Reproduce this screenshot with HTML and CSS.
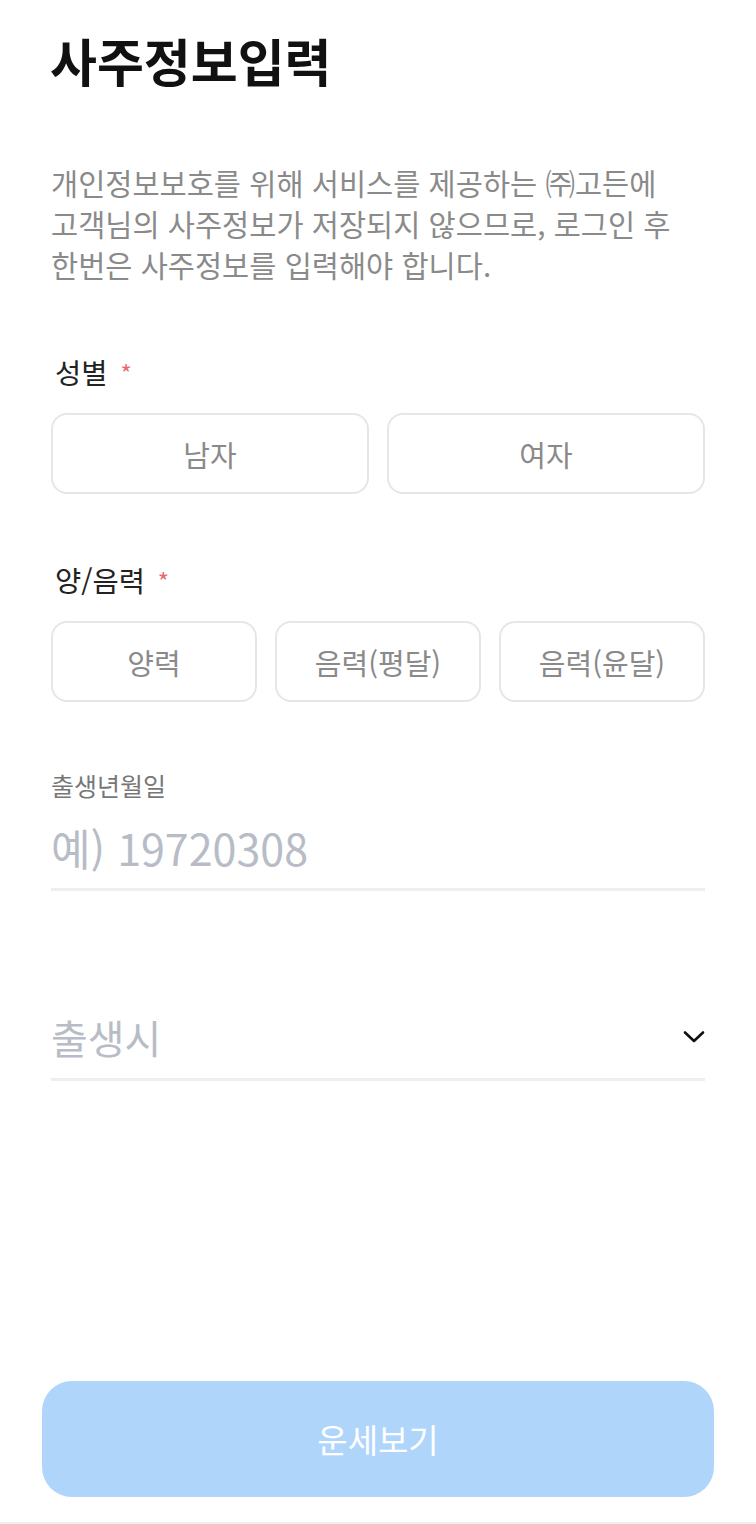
FILE: index.html
```html
<!DOCTYPE html>
<html lang="ko">
<head>
  <meta charset="UTF-8">
  <title>사주정보입력</title>
  <link rel="stylesheet" href="styles.css">
</head>
<body>
  <div class="page">
    <h1>사주정보입력</h1>
    <p class="notice">개인정보보호를 위해 서비스를 제공하는 ㈜고든에<br>고객님의 사주정보가 저장되지 않으므로, 로그인 후<br>한번은 사주정보를 입력해야 합니다.</p>

    <!-- 성별 -->
    <div class="label">성별 <span class="req">*</span></div>
    <div class="choices two">
      <button class="choice">남자</button>
      <button class="choice">여자</button>
    </div>

    <!-- 양/음력 -->
    <div class="label cal">양/음력 <span class="req">*</span></div>
    <div class="choices three">
      <button class="choice">양력</button>
      <button class="choice">음력(평달)</button>
      <button class="choice">음력(윤달)</button>
    </div>

    <div class="small-label">출생년월일</div>
    <div class="field">
      <input type="text" placeholder="예) 19720308">
    </div>

    <div class="field select">
      <span class="placeholder">출생시</span>
      <svg width="24" height="24" viewBox="0 0 24 24"><path d="M3 7.5l9 8.5 9-8.5" fill="none" stroke="#111" stroke-width="2.6" stroke-linecap="round" stroke-linejoin="round"/></svg>
    </div>

    <div class="spacer"></div>
    <button class="submit">운세보기</button>
  </div>
  <div class="bottom"></div>
</body>
</html>
```

FILE: styles.css
```css
* {
  box-sizing: border-box;
}

body {
  margin: 0;
  background: #fff;
  font-family: "Noto Sans CJK KR", "Noto Sans", sans-serif;
  color: #222;
}

.page {
  height: 1522px;
  display: flex;
  flex-direction: column;
  padding: 0 51px 0 51px;
}

h1 {
  margin: 22px 0 0 -1px;
  font-size: 51px;
  font-weight: 700;
  line-height: 76px;
  color: #111;
}

.notice {
  margin: 64px 0 0 0;
  font-size: 29.5px;
  line-height: 41px;
  color: #8a8a8a;
}

.label {
  margin-top: 67px;
  padding-left: 4px;
  font-size: 28.5px;
  line-height: 40px;
  color: #222;
}

.label.cal {
  margin-top: 66px;
}

.req {
  color: #e86a6a;
  font-size: 24px;
  margin-left: 5px;
  vertical-align: 1px;
}

.choices {
  display: grid;
  gap: 18px;
  margin-top: 20px;
}

.choices.two {
  grid-template-columns: 1fr 1fr;
}

.choices.three {
  grid-template-columns: 1fr 1fr 1fr;
}

.choice {
  height: 81px;
  border: 2px solid #e6e6e6;
  border-radius: 16px;
  background: #fff;
  font-family: inherit;
  font-size: 29px;
  color: #8a8a8a;
}

.small-label {
  margin-top: 63px;
  font-size: 25px;
  line-height: 40px;
  color: #777;
}

.field {
  display: flex;
  align-items: center;
  height: 86px;
  border-bottom: 3px solid #eeeeee;
}

.field input {
  border: none;
  outline: none;
  width: 100%;
  padding: 0;
  font-family: inherit;
  font-size: 43px;
  color: #222;
}

.field input::placeholder {
  color: #b8bcc6;
}

.field.select {
  margin-top: 104px;
  justify-content: space-between;
}

.placeholder {
  font-size: 40px;
  color: #b8bcc6;
}

.field.select svg {
  margin-right: -1px;
}

.spacer {
  flex: 1;
}

.submit {
  margin: 0 -9px 25px -9px;
  height: 116px;
  border: none;
  border-radius: 30px;
  background: #b0d5fb;
  color: #fff;
  font-family: inherit;
  font-size: 33px;
}

.bottom {
  height: 2px;
  background: #eeeeee;
}
```
